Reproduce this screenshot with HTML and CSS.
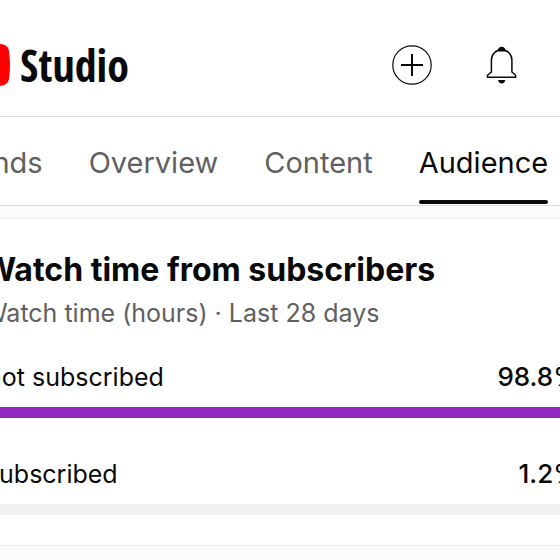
FILE: index.html
```html
<!DOCTYPE html>
<html lang="en">
<head>
<meta charset="utf-8">
<title>Studio</title>
<link rel="stylesheet" href="styles.css">
</head>
<body>
<div class="page">
  <header class="header">
    <a class="brand" href="#">
      <svg class="brand-mark" viewBox="0 0 62 44" aria-hidden="true"><path fill="#f00" d="M10 1Q31-1 52 1Q60 1 61 8Q63 22 61 36Q60 42 52 43Q31 45 10 43Q2 42 1 36Q-1 22 1 8Q2 2 10 1Z"/><path fill="#fff" d="M25 13L41 22L25 31Z"/></svg>
      <span class="brand-name">Studio</span>
    </a>
    <div class="actions">
      <button class="icon-button" type="button" aria-label="Create">
        <svg viewBox="0 0 40 40" fill="none" stroke="#0a0a0a"><circle cx="20" cy="20" r="19.2" stroke-width="1.2"/><path stroke-width="2" d="M20 9V31M9 20H31"/></svg>
      </button>
      <button class="icon-button" type="button" aria-label="Notifications">
        <svg viewBox="0 0 40 40"><path fill="none" stroke="#0a0a0a" stroke-width="1.5" d="M9.400 27V15A10.200 10.200 0 0 1 29.900 15V27L33.600 30.300V32.300H5.500V30.300Z"/><path fill="#0a0a0a" d="M15.600 6.500Q16 1.700 19.700 1.700Q23.400 1.700 23.800 6.500ZM16 35H23.400Q22.600 38.400 19.700 38.400Q16.800 38.400 16 35Z"/></svg>
      </button>
    </div>
  </header>
  <nav class="tabs">
    <a class="tab" href="#">Trends</a>
    <a class="tab" href="#">Overview</a>
    <a class="tab" href="#">Content</a>
    <a class="tab tab-active" href="#" aria-current="page">Audience</a>
  </nav>
  <main class="content">
    <section class="card">
      <h1 class="title">Watch time from subscribers</h1>
      <p class="subtitle">Watch time (hours) · Last 28 days</p>
      <div class="metric">
        <div class="metric-row"><span>Not subscribed</span><span class="value">98.8%</span></div>
        <div class="track"><div class="fill" style="width: 98.8%"></div></div>
      </div>
      <div class="metric">
        <div class="metric-row"><span>Subscribed</span><span class="value">1.2%</span></div>
        <div class="track"><div class="fill" style="width: 1.2%"></div></div>
      </div>
    </section>
  </main>
</div>
</body>
</html>
```
FILE: styles.css
```css
* {
  box-sizing: border-box;
}

body {
  margin: 0;
  overflow: hidden;
  background: #fff;
  color: #0a0a0a;
  font-family: Inter, "Liberation Sans", sans-serif;
}

/* The canvas is wider than the window and bleeds off both sides. */
.page {
  margin: 0 -20px 0 -52px;
}

.header {
  display: flex;
  align-items: center;
  justify-content: space-between;
  padding: 37px 58px 23px 0;
  border-bottom: 1px solid #ddd;
}

.brand {
  display: flex;
  align-items: center;
  gap: 10px;
  color: inherit;
  text-decoration: none;
}

.brand-mark {
  width: 62px;
  height: 44px;
}

.brand-name {
  font: bold 44px/56px "Open Sans Condensed", "Liberation Sans Narrow", "Roboto Condensed", "Liberation Sans", sans-serif;
}

.actions {
  display: flex;
  gap: 50px;
}

.icon-button {
  width: 40px;
  height: 40px;
  padding: 0;
  border: 0;
  background: none;
}

.icon-button svg {
  display: block;
}

.tabs {
  display: flex;
  gap: 46px;
  border-bottom: 1px solid #ddd;
}

.tab {
  padding: 27px 0 24px;
  color: #606060;
  font-size: 29px;
  line-height: 37px;
  text-decoration: none;
}

.tab-active {
  position: relative;
  color: #0a0a0a;
}

.tab-active::after {
  content: "";
  position: absolute;
  inset: auto 0 1px;
  height: 4px;
  border-radius: 2px;
  background: #0a0a0a;
}

.content {
  padding: 12px 0 24px;
  background: #fbfbfb;
}

.card {
  padding: 31px 0 30px 34px;
  border: 1px solid #eee;
  background: #fff;
}

.title {
  margin: 0;
  font-size: 32px;
  font-weight: 700;
  line-height: 40px;
}

.subtitle {
  margin: 5px 0 28px;
  color: #606060;
  font-size: 25px;
  line-height: 36px;
}

.metric + .metric {
  margin-top: 38px;
}

.metric-row {
  display: flex;
  justify-content: space-between;
  margin-bottom: 12px;
  font-size: 25px;
  line-height: 36px;
}

.value {
  font-size: 26px;
  font-weight: 500;
}

.track {
  height: 11px;
  background: #f1f1f1;
}

.fill {
  height: 100%;
  background: #9129bf;
}
```
